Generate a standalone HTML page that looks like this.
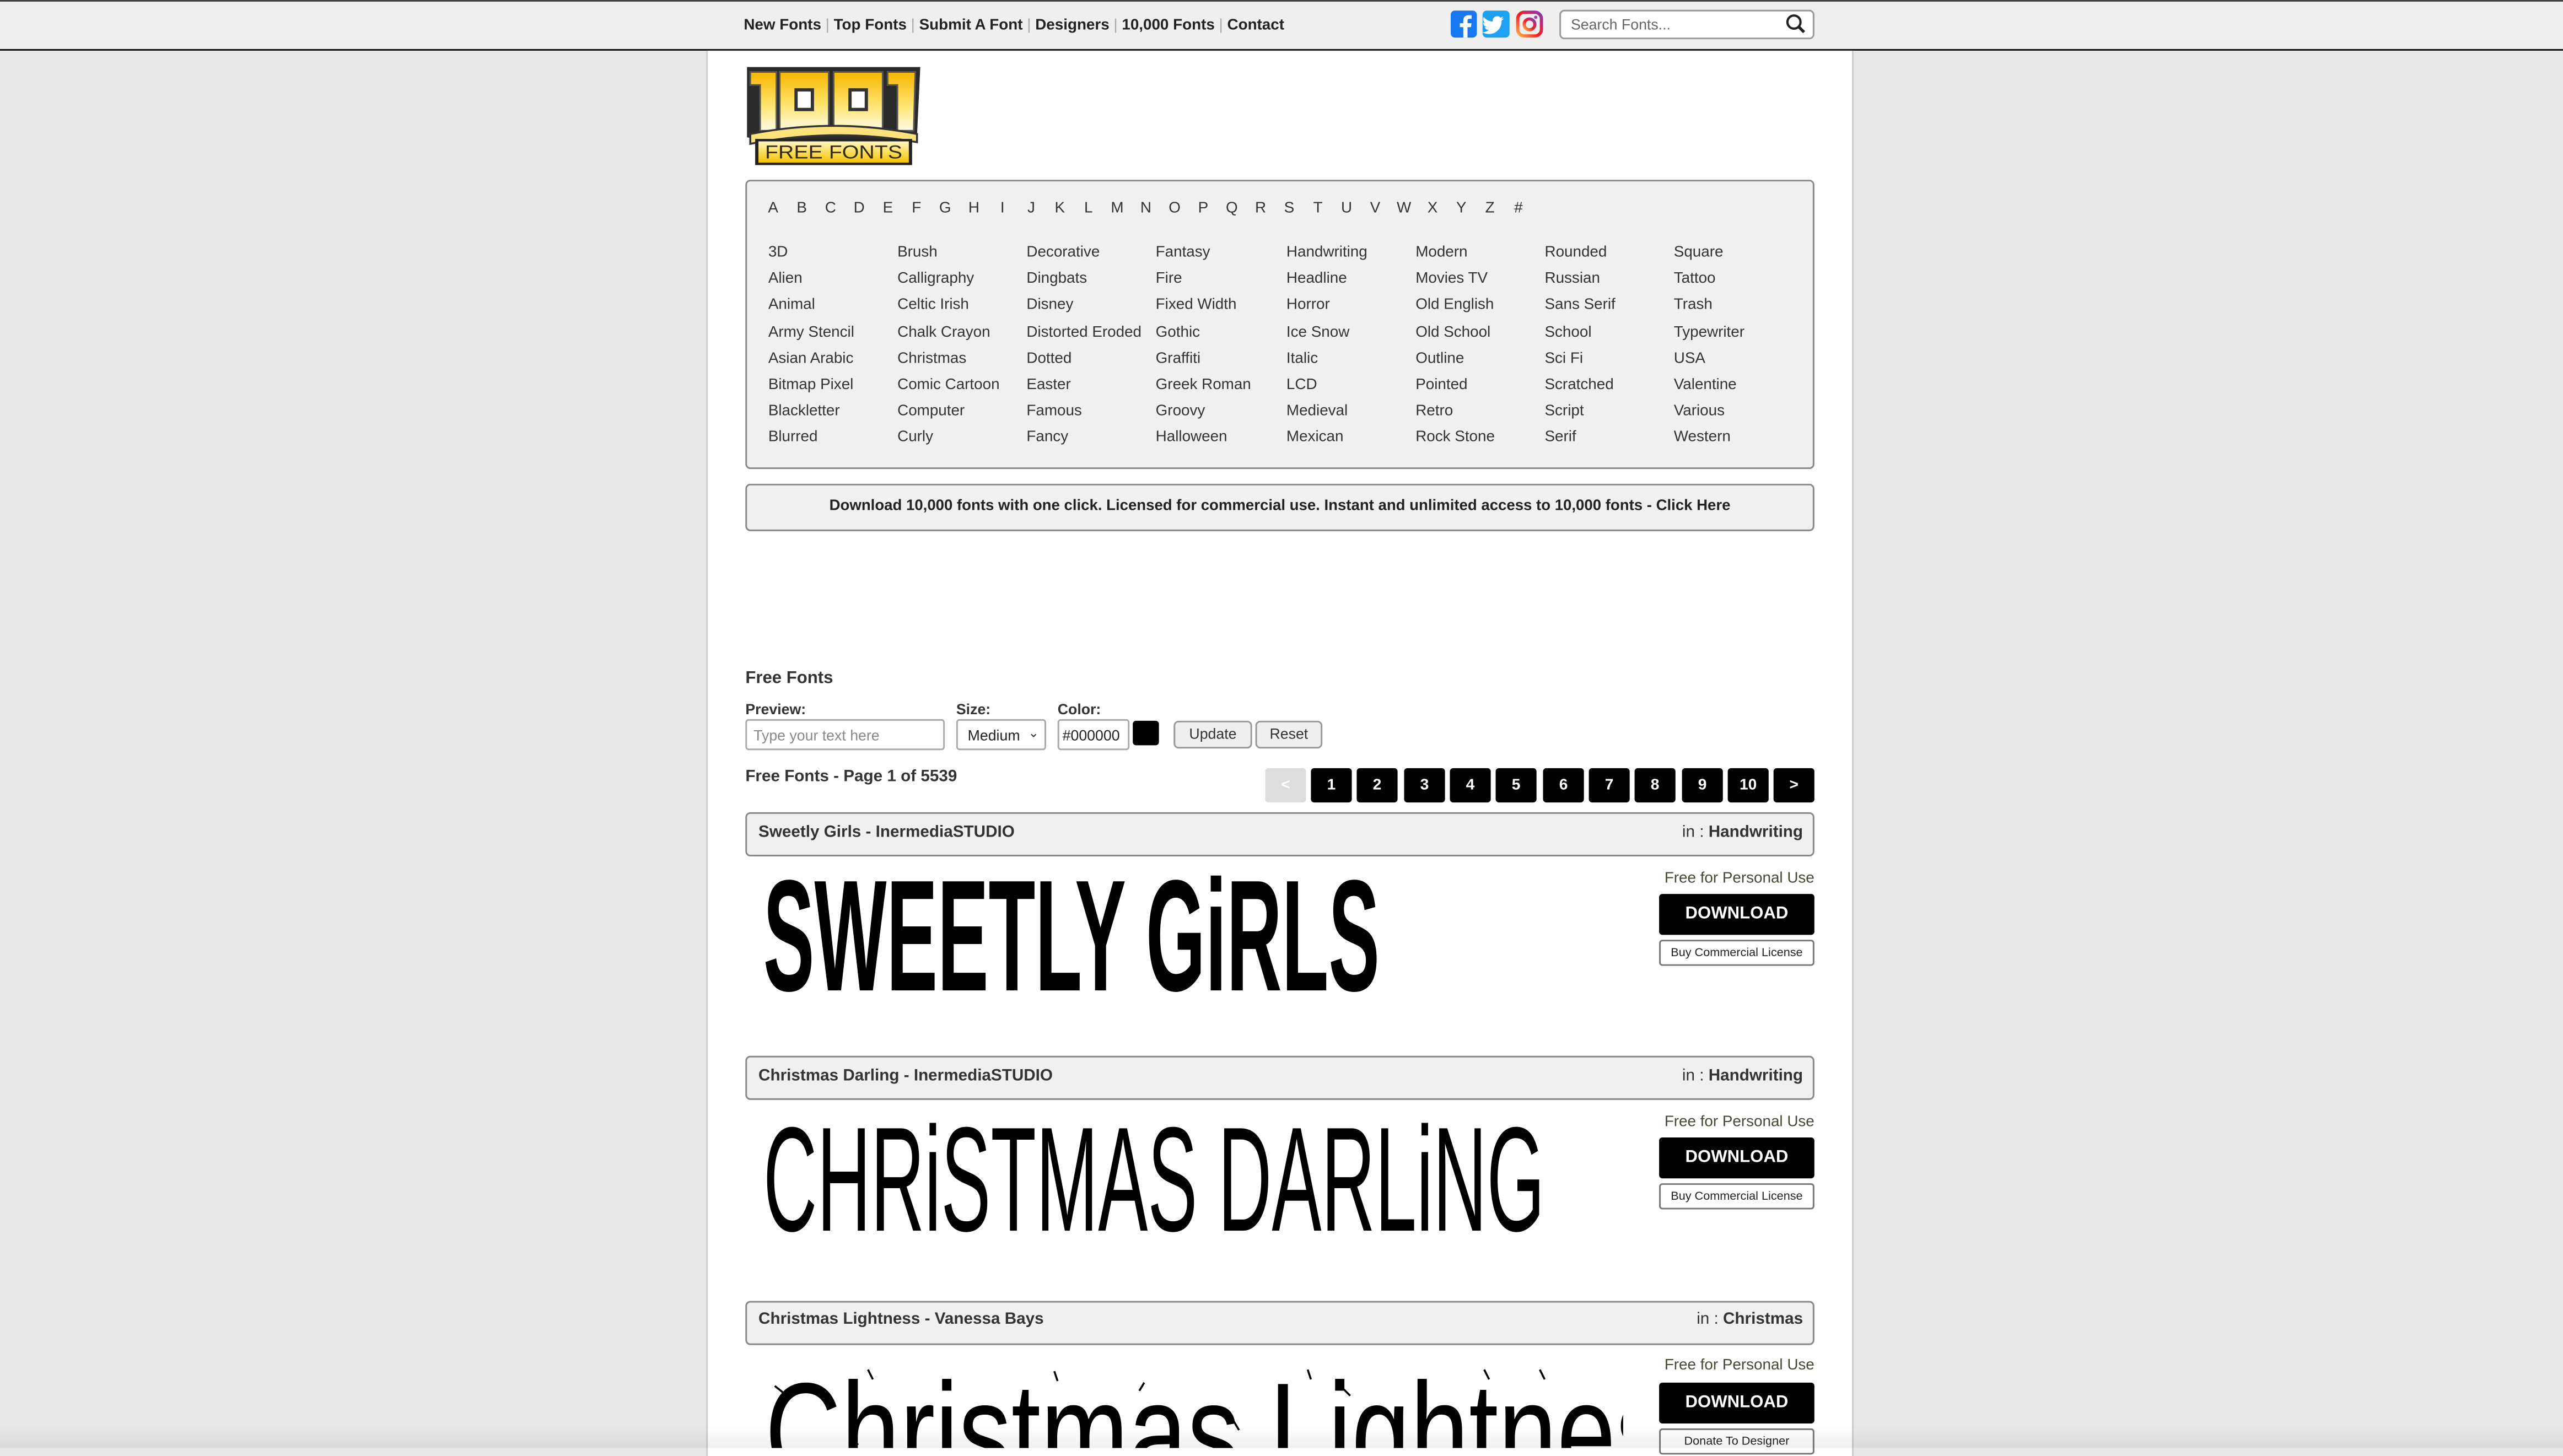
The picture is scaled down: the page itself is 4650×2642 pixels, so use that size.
<!DOCTYPE html>
<html><head><meta charset="utf-8"><style>
html,body{margin:0;padding:0;background:#e8e8e8;width:4650px;height:2626px;overflow:hidden}
#s{position:absolute;left:0;top:0;width:1568px;height:886px;transform:scale(2.9656);transform-origin:0 0;font-family:"Liberation Sans",Arial,sans-serif;color:#333;background:#e8e8e8}
.a{position:absolute;white-space:nowrap}
#top{left:0;top:0;width:1568px;height:29px;background:#efefef;border-top:1px solid #444;border-bottom:1.5px solid #111}
#col{left:432px;top:31px;width:700px;height:860px;background:#fff;border-left:1px solid #ccc;border-right:1px solid #ccc}
.nav{font-size:9.4px;font-weight:bold;color:#222;top:9px}
.sep{color:#aaa;font-weight:normal}
.box{border:1px solid #888;border-radius:3px;background:#f0f0f0}
.cat{font-size:9.4px;color:#333}
.lt{position:absolute;top:121px;font-size:9.4px;color:#333;width:12px;text-align:center;margin-left:-3px}
.pg{position:absolute;top:470px;width:25px;height:21px;border-radius:2px;background:#000;color:#fff;font-size:9.5px;font-weight:bold;text-align:center;line-height:21px}
.hd{font-size:10px;font-weight:bold;color:#333}
.dl{position:absolute;left:1015px;width:95px;height:25px;background:#000;color:#fff;border-radius:2px;font-size:10.5px;font-weight:bold;text-align:center;line-height:25px}
.bl{position:absolute;left:1015px;width:93px;height:14px;border:1px solid #777;border-radius:2px;background:#fff;font-size:7.3px;color:#222;text-align:center;line-height:14px}
.fp{position:absolute;left:1000px;width:110px;text-align:right;font-size:9.4px;color:#444a33}
.inp{position:absolute;border:1px solid #aaa;border-radius:2px;background:#fff;font-size:9px}
</style></head><body><div id="s">
<div class="a" id="top"></div>
<div class="a nav" style="left:455px">New Fonts <span class="sep">|</span> Top Fonts <span class="sep">|</span> Submit A Font <span class="sep">|</span> Designers <span class="sep">|</span> 10,000 Fonts <span class="sep">|</span> Contact</div>
<svg class="a" style="left:887px;top:6px" width="58" height="18" viewBox="0 0 58 18">
<rect x="0.5" y="0.5" width="16" height="16.5" rx="2.5" fill="#1877f2"/>
<path d="M10.8 17V10.6h2.1l.3-2.4h-2.4V6.7c0-.7.2-1.2 1.2-1.2h1.3V3.4c-.2 0-1-.1-1.9-.1-1.9 0-3.2 1.2-3.2 3.3v1.6H6.1v2.4h2.1V17z" fill="#fff"/>
<rect x="20" y="0.5" width="16.5" height="16.5" rx="2.5" fill="#1da1f2"/>
<path d="M33 5.2c-.5.2-1 .4-1.6.4.6-.3 1-.9 1.2-1.5-.5.3-1.1.5-1.7.7-.5-.6-1.2-.9-2-.9-1.5 0-2.7 1.2-2.7 2.7 0 .2 0 .4.1.6-2.3-.1-4.300-1.2-5.6-2.8-.2.4-.4.9-.4 1.4 0 .9.5 1.8 1.2 2.3-.4 0-.9-.1-1.2-.3 0 1.3.9 2.4 2.2 2.7-.4.1-.8.1-1.2 0 .3 1.1 1.3 1.9 2.5 1.9-.9.7-2.1 1.2-3.4 1.2h-.6c1.2.8 2.6 1.2 4.1 1.2 5 0 7.7-4.1 7.7-7.7v-.4c.5-.4 1-.9 1.4-1.5z" fill="#fff"/>
<defs><linearGradient id="ig" x1="0" y1="1" x2="1" y2="0"><stop offset="0" stop-color="#fcb045"/><stop offset=".45" stop-color="#fd1d1d"/><stop offset="1" stop-color="#833ab4"/></linearGradient></defs>
<rect x="41.5" y="1.5" width="14.5" height="14.5" rx="4" fill="none" stroke="url(#ig)" stroke-width="2"/>
<circle cx="48.7" cy="8.9" r="3.3" fill="none" stroke="url(#ig)" stroke-width="1.9"/>
<circle cx="52.5" cy="4.6" r="1" fill="#a33ab4"/>
</svg>
<div class="a" style="left:954px;top:6px;width:154px;height:16px;background:#fff;border:1px solid #999;border-radius:3px"></div>
<div class="a" style="left:961px;top:10px;font-size:9px;color:#666">Search Fonts...</div>
<svg class="a" style="left:1092px;top:8px" width="13" height="13" viewBox="0 0 13 13"><circle cx="5.5" cy="5.5" r="4" fill="none" stroke="#222" stroke-width="1.4"/><path d="M8.4 8.4l3.3 3.3" stroke="#222" stroke-width="1.8"/></svg>
<div class="a" id="col"></div>
<!-- logo -->
<svg class="a" style="left:455px;top:38px" width="112" height="64" viewBox="0 0 112 64">
<defs><linearGradient id="yg" x1="0" y1="0" x2="0" y2="1"><stop offset="0" stop-color="#f7b500"/><stop offset=".55" stop-color="#ffe46a"/><stop offset="1" stop-color="#fffbe6"/></linearGradient>
<linearGradient id="yg2" x1="0" y1="0" x2="0" y2="1"><stop offset="0" stop-color="#fff7c0"/><stop offset="1" stop-color="#f4c400"/></linearGradient></defs>
<path d="M2 3h106l-2 42 -10 3 H12 L2 46z" fill="#2a2a2a"/>
<path d="M4 6h16v36H10V14H4z" fill="url(#yg)" stroke="#555" stroke-width="1"/>
<path d="M22 6h30v36H22zM55 6h30v36H55z" fill="url(#yg)" stroke="#555" stroke-width="1"/>
<path d="M88 6h17l-1 36H94V14h-6z" fill="url(#yg)" stroke="#555" stroke-width="1"/>
<rect x="32" y="17" width="10" height="12" fill="#fff" stroke="#333" stroke-width="2"/>
<rect x="65" y="17" width="10" height="12" fill="#fff" stroke="#333" stroke-width="2"/>
<path d="M4 44 Q55 34 106 44 L106 49 Q55 40 4 50z" fill="#ffe27a" stroke="#333" stroke-width="1.2"/>
<rect x="7" y="47" width="96" height="16" fill="#222"/>
<rect x="9" y="48.5" width="92" height="13" fill="url(#yg2)"/>
<text x="55" y="59" text-anchor="middle" font-family="Liberation Sans" font-size="11.5" fill="#332a10" textLength="84" lengthAdjust="spacingAndGlyphs">FREE FONTS</text>
</svg>
<!-- categories -->
<div class="a box" style="left:456px;top:110px;width:652px;height:175px"></div>
<div class="lt" style="left:470px">A</div><div class="lt" style="left:487.5px">B</div><div class="lt" style="left:505.1px">C</div><div class="lt" style="left:522.6px">D</div><div class="lt" style="left:540.2px">E</div><div class="lt" style="left:557.7px">F</div><div class="lt" style="left:575.2px">G</div><div class="lt" style="left:592.8px">H</div><div class="lt" style="left:610.3px">I</div><div class="lt" style="left:627.9px">J</div><div class="lt" style="left:645.4px">K</div><div class="lt" style="left:662.9px">L</div><div class="lt" style="left:680.5px">M</div><div class="lt" style="left:698px">N</div><div class="lt" style="left:715.6px">O</div><div class="lt" style="left:733.1px">P</div><div class="lt" style="left:750.6px">Q</div><div class="lt" style="left:768.2px">R</div><div class="lt" style="left:785.7px">S</div><div class="lt" style="left:803.3px">T</div><div class="lt" style="left:820.8px">U</div><div class="lt" style="left:838.3px">V</div><div class="lt" style="left:855.9px">W</div><div class="lt" style="left:873.4px">X</div><div class="lt" style="left:891px">Y</div><div class="lt" style="left:908.5px">Z</div><div class="lt" style="left:926px">#</div>
<div class="a cat" style="left:470px;top:146px;line-height:16.2px">3D<br>Alien<br>Animal<br>Army Stencil<br>Asian Arabic<br>Bitmap Pixel<br>Blackletter<br>Blurred</div>
<div class="a cat" style="left:549px;top:146px;line-height:16.2px">Brush<br>Calligraphy<br>Celtic Irish<br>Chalk Crayon<br>Christmas<br>Comic Cartoon<br>Computer<br>Curly</div>
<div class="a cat" style="left:628px;top:146px;line-height:16.2px">Decorative<br>Dingbats<br>Disney<br>Distorted Eroded<br>Dotted<br>Easter<br>Famous<br>Fancy</div>
<div class="a cat" style="left:707px;top:146px;line-height:16.2px">Fantasy<br>Fire<br>Fixed Width<br>Gothic<br>Graffiti<br>Greek Roman<br>Groovy<br>Halloween</div>
<div class="a cat" style="left:787px;top:146px;line-height:16.2px">Handwriting<br>Headline<br>Horror<br>Ice Snow<br>Italic<br>LCD<br>Medieval<br>Mexican</div>
<div class="a cat" style="left:866px;top:146px;line-height:16.2px">Modern<br>Movies TV<br>Old English<br>Old School<br>Outline<br>Pointed<br>Retro<br>Rock Stone</div>
<div class="a cat" style="left:945px;top:146px;line-height:16.2px">Rounded<br>Russian<br>Sans Serif<br>School<br>Sci Fi<br>Scratched<br>Script<br>Serif</div>
<div class="a cat" style="left:1024px;top:146px;line-height:16.2px">Square<br>Tattoo<br>Trash<br>Typewriter<br>USA<br>Valentine<br>Various<br>Western</div>
<!-- banner -->
<div class="a box" style="left:456px;top:296px;width:652px;height:27px"></div>
<div class="a" style="left:456px;top:304px;width:654px;text-align:center;font-size:9.3px;font-weight:bold;color:#222">Download 10,000 fonts with one click. Licensed for commercial use. Instant and unlimited access to 10,000 fonts - Click Here</div>
<!-- controls -->
<div class="a" style="left:456px;top:409px;font-size:10.5px;font-weight:bold;color:#333">Free Fonts</div>
<div class="a" style="left:456px;top:429px;font-size:9px;font-weight:bold">Preview:</div>
<div class="a" style="left:585px;top:429px;font-size:9px;font-weight:bold">Size:</div>
<div class="a" style="left:647px;top:429px;font-size:9px;font-weight:bold">Color:</div>
<div class="inp" style="left:456px;top:440px;width:120px;height:17px"><span style="position:absolute;left:4px;top:4px;color:#888">Type your text here</span></div>
<div class="inp" style="left:585px;top:440px;width:53px;height:17px"><span style="position:absolute;left:6px;top:4px;color:#222">Medium</span><span style="position:absolute;left:43px;top:3px;font-size:8px">&#8964;</span></div>
<div class="inp" style="left:647px;top:440px;width:42px;height:17px"><span style="position:absolute;left:2px;top:4px;color:#222">#000000</span></div>
<div class="a" style="left:693px;top:441px;width:16px;height:15px;background:#000;border-radius:2px"></div>
<div class="a" style="left:718px;top:441px;width:46px;height:15px;background:#efefef;border:1px solid #999;border-radius:3px;font-size:9px;text-align:center;line-height:15px">Update</div>
<div class="a" style="left:768px;top:441px;width:39px;height:15px;background:#efefef;border:1px solid #999;border-radius:3px;font-size:9px;text-align:center;line-height:15px">Reset</div>
<div class="a" style="left:456px;top:470px;font-size:10px;font-weight:bold;color:#333">Free Fonts - Page 1 of 5539</div>
<div class="pg" style="left:774px;background:#ddd;color:#fff">&lt;</div>
<div class="pg" style="left:802px">1</div><div class="pg" style="left:830px">2</div><div class="pg" style="left:859px">3</div><div class="pg" style="left:887px">4</div><div class="pg" style="left:915px">5</div><div class="pg" style="left:944px">6</div><div class="pg" style="left:972px">7</div><div class="pg" style="left:1000px">8</div><div class="pg" style="left:1029px">9</div><div class="pg" style="left:1057px">10</div><div class="pg" style="left:1085px">&gt;</div>
<!-- item 1 -->
<div class="a box" style="left:456px;top:497px;width:652px;height:25px"></div>
<div class="a hd" style="left:464px;top:504px">Sweetly Girls - InermediaSTUDIO</div>
<div class="a hd" style="left:900px;top:504px;width:203px;text-align:right"><span style="font-weight:normal">in : </span>Handwriting</div>
<svg class="a" style="left:0;top:0" width="1568" height="886">
<text x="467" y="606" font-family="Liberation Sans" font-weight="bold" font-size="97" fill="#000" textLength="377" lengthAdjust="spacingAndGlyphs">SWEETLY GiRLS</text>
<text x="467" y="753" font-family="Liberation Sans" font-size="91" fill="#000" textLength="478" lengthAdjust="spacingAndGlyphs">CHRiSTMAS DARLiNG</text>
<defs><clipPath id="cl"><rect x="460" y="830" width="533" height="56"/></clipPath></defs>
<g clip-path="url(#cl)"><text x="468" y="906" font-family="Liberation Sans" font-size="86" fill="#000" textLength="585" lengthAdjust="spacingAndGlyphs">Christmas Lightness</text>
<g stroke="#000" stroke-width="1.2" fill="none"><path d="M474 848l5 4M531 838l3 6M645 839l2 6M800 838l2 6M908 838l3 6M942 838l3 6M822 850l4 4M700 846l-3 5M520 880l5 4M755 870l3 5"/></g></g>
</svg>
<div class="fp" style="top:531px">Free for Personal Use</div>
<div class="dl" style="top:547px">DOWNLOAD</div>
<div class="bl" style="top:575px">Buy Commercial License</div>
<!-- item 2 -->
<div class="a box" style="left:456px;top:646px;width:652px;height:25px"></div>
<div class="a hd" style="left:464px;top:653px">Christmas Darling - InermediaSTUDIO</div>
<div class="a hd" style="left:900px;top:653px;width:203px;text-align:right"><span style="font-weight:normal">in : </span>Handwriting</div>
<div class="fp" style="top:680px">Free for Personal Use</div>
<div class="dl" style="top:696px">DOWNLOAD</div>
<div class="bl" style="top:724px">Buy Commercial License</div>
<!-- item 3 -->
<div class="a box" style="left:456px;top:796px;width:652px;height:25px"></div>
<div class="a hd" style="left:464px;top:802px">Christmas Lightness - Vanessa Bays</div>
<div class="a hd" style="left:900px;top:802px;width:203px;text-align:right"><span style="font-weight:normal">in : </span>Christmas</div>
<div class="fp" style="top:829px">Free for Personal Use</div>
<div class="dl" style="top:846px">DOWNLOAD</div>
<div class="bl" style="top:874px">Donate To Designer</div>
<div class="a" style="left:0;top:872px;width:1568px;height:14px;background:linear-gradient(rgba(0,0,0,0),rgba(0,0,0,0.06))"></div>
</div></body></html>
